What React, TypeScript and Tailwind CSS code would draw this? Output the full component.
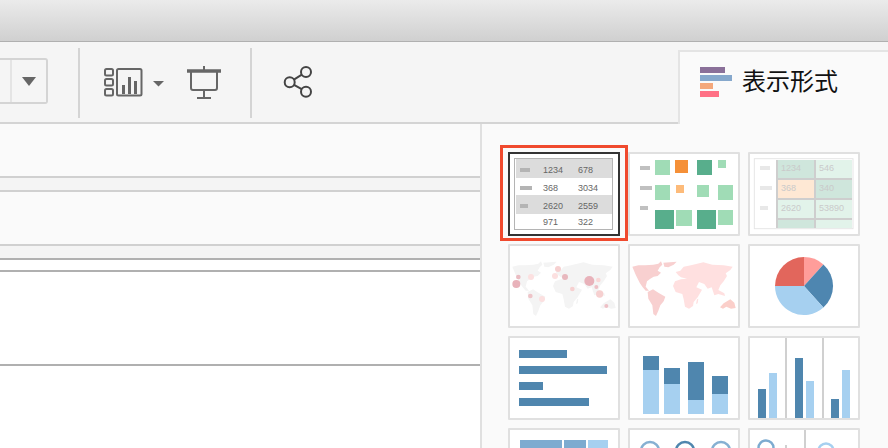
const AMERICAS =
  "M22 80 L40 76 L60 76 L85 74 L100 71 L108 64 L112 74 L104 82 L98 92 L108 98 L98 108 L86 110 L76 116 L66 124 L62 140 L72 152 L62 152 L52 140 L44 128 L32 104 Z " +
  "M115 68 L155 65 L146 74 L130 82 L118 80 Z " +
  "M68 156 L84 148 L100 158 L121 170 L116 184 L106 196 L100 212 L93 228 L85 222 L82 196 L70 176 Z";
const OLD_WORLD =
  "M152 96 L166 92 L176 80 L198 76 L235 67 L262 74 L296 76 L323 80 L316 90 L302 100 L306 108 L296 124 L286 136 L280 150 L298 160 L300 168 L280 162 L268 166 L260 142 L248 146 L238 132 L222 126 L214 142 L231 149 L218 172 L206 186 L204 198 L192 206 L180 200 L176 178 L172 162 L152 156 L144 138 L150 124 L168 118 L186 116 L168 112 L160 106 Z " +
  "M216 178 L220 176 L218 190 L213 192 Z";
const AUSTRALIA = "M285 202 L296 190 L306 184 L316 178 L328 188 L332 204 L318 206 L304 200 L294 206 Z";

const BUBBLES: [number, number, number, string][] = [
  [46, 111, 7, "#eabcc2"],
  [40, 132, 12, "#e8b2ba"],
  [84, 111, 9, "#fce0e0"],
  [82, 168, 7, "#eec4c8"],
  [117, 177, 9, "#fce0e0"],
  [165, 87, 9, "#f6d0d0"],
  [156, 108, 9, "#fce0e0"],
  [186, 111, 9, "#e8b8be"],
  [208, 147, 7, "#f6d0d0"],
  [259, 123, 15, "#e8b2ba"],
  [286, 120, 7, "#f9d8d8"],
  [280, 141, 6, "#eec0c6"],
  [290, 162, 11, "#f6d0d0"],
  [310, 198, 6, "#eec0c6"],
];

function Tile({ children, view }: { children: React.ReactNode; view: string }) {
  return (
    <div className="h-[84px] border-2 border-[#e0e0e0] bg-white rounded-[1px]">
      <svg width="108" height="80" viewBox={view} className="block">
        {children}
      </svg>
    </div>
  );
}

function TableTile() {
  const rows = [
    ["1234", "678", 5, 10, true],
    ["368", "3034", 23, 12, false],
    ["2620", "2559", 41, 8, true],
    ["971", "322", 57, 0, false],
  ] as const;
  return (
    <div className="relative h-[84px] border-2 border-[#333333] bg-white">
      {/* red selection frame sits over the gap round the tile */}
      <div className="absolute -left-[10px] -top-[9px] h-[96px] w-[128px] border-[3px] border-[#f04a2e] pointer-events-none" />
      <svg width="108" height="80" viewBox="0 0 108 80" className="block">
        <rect x="4.5" y="4.5" width="98" height="71" fill="#fff" stroke="#b4b4b4" />
        {rows.map(([a, b, y, dash, shaded]) => (
          <g key={a}>
            {shaded && <rect x="6" y={y} width="96" height="19" fill="#dcdcdc" />}
            {dash > 0 && <rect x="10" y={y + 9} width={dash} height="4" fill="#b4b4b4" />}
            <text x="33" y={y + 14} fontSize="9" fill="#666" fontFamily="Liberation Sans, sans-serif">{a}</text>
            <text x="68" y={y + 14} fontSize="9" fill="#666" fontFamily="Liberation Sans, sans-serif">{b}</text>
          </g>
        ))}
      </svg>
    </div>
  );
}

function Treemap() {
  const light = "#a0dcb6";
  const dark = "#58ae8c";
  const cells: [number, number, number, string][] = [
    [90, 45, 45, light], [150, 45, 39, "#f59038"], [216, 45, 45, dark], [279, 45, 24, light],
    [90, 120, 45, light], [153, 120, 24, "#fdbb7a"], [216, 120, 36, light], [279, 120, 45, light],
    [90, 195, 57, dark], [153, 195, 48, light], [216, 195, 57, dark], [279, 195, 45, light],
  ];
  return (
    <Tile view="15 27 324 240">
      <rect x="45" y="63" width="30" height="12" fill="#c0c0c0" />
      <rect x="45" y="123" width="36" height="12" fill="#c0c0c0" />
      <rect x="45" y="183" width="24" height="12" fill="#c0c0c0" />
      {cells.map(([x, y, s, c]) => (
        <rect key={`${x}-${y}`} x={x} y={y} width={s} height={s} fill={c} />
      ))}
    </Tile>
  );
}

function Highlight() {
  const a = "#cfe6dc";
  const b = "#e2f3ea";
  const cells: [number, number, number, string, string][] = [
    [99, 45, 54, a, "1234"], [213, 45, 54, b, "546"],
    [99, 105, 54, "#fee8d4", "368"], [213, 105, 54, a, "340"],
    [99, 165, 54, b, "2620"], [213, 165, 54, b, "53890"],
    [99, 225, 24, a, ""], [213, 225, 24, b, ""],
  ];
  return (
    <Tile view="15 27 324 240">
      <rect x="28" y="41" width="296" height="210" fill="#fff" stroke="#e6e6e6" strokeWidth="3" />
      <rect x="93" y="45" width="228" height="204" fill="#cecece" />
      <rect x="45" y="63" width="30" height="12" fill="#e8e8e8" />
      <rect x="45" y="123" width="36" height="12" fill="#e8e8e8" />
      <rect x="45" y="183" width="24" height="12" fill="#e8e8e8" />
      {cells.map(([x, y, h, c, t]) => (
        <g key={`${x}-${y}`}>
          <rect x={x} y={y} width="108" height={h} fill={c} />
          {t && (
            <text x={x + 9} y={y + 33} fontSize="27" fill="#cacaca" fontFamily="Liberation Sans, sans-serif">{t}</text>
          )}
        </g>
      ))}
    </Tile>
  );
}

function BubbleMap() {
  return (
    <Tile view="15 18 324 240">
      <path d={`${AMERICAS} ${OLD_WORLD} ${AUSTRALIA}`} fill="#f4f4f4" />
      {BUBBLES.map(([x, y, r, c]) => (
        <circle key={`${x}-${y}`} cx={x - 6} cy={y} r={r} fill={c} />
      ))}
    </Tile>
  );
}

function FilledMap() {
  return (
    <Tile view="15 18 324 240">
      <path d={OLD_WORLD} fill="#ffe0e0" />
      <path d={AMERICAS} fill="#f8d0d0" />
      <path d={AUSTRALIA} fill="#fbcfca" />
    </Tile>
  );
}

function Pie() {
  return (
    <Tile view="0 0 108 80">
      <path d="M54 40 L54 11 A29 29 0 0 1 73.4 18.4 Z" fill="#ff9d9a" />
      <path d="M54 40 L73.4 18.4 A29 29 0 0 1 73.4 61.6 Z" fill="#4e86b0" />
      <path d="M54 40 L73.4 61.6 A29 29 0 0 1 25 40 Z" fill="#a6d0f0" />
      <path d="M54 40 L25 40 A29 29 0 0 1 54 11 Z" fill="#e2665c" />
    </Tile>
  );
}

function HBars() {
  return (
    <Tile view="21 18 324 240">
      <rect x="48" y="54" width="144" height="24" fill="#4f86ae" />
      <rect x="48" y="102" width="264" height="24" fill="#4f86ae" />
      <rect x="48" y="150" width="72" height="24" fill="#4f86ae" />
      <rect x="48" y="198" width="210" height="24" fill="#4f86ae" />
    </Tile>
  );
}

function Stacked() {
  const bars: [number, number, number][] = [
    [420, 72, 114],
    [483, 108, 156],
    [555, 90, 204],
    [627, 132, 186],
  ];
  return (
    <Tile view="381 18 324 240">
      {bars.map(([x, top, mid]) => (
        <g key={x}>
          <rect x={x} y={top} width="48" height={mid - top} fill="#4f86ae" />
          <rect x={x} y={mid} width="48" height={246 - mid} fill="#a6d0f0" />
        </g>
      ))}
    </Tile>
  );
}

function SideBySide() {
  const bars: [number, number, string][] = [
    [45, 171, "#4f86ae"], [78, 123, "#a6d0f0"],
    [156, 78, "#4f86ae"], [189, 147, "#a6d0f0"],
    [264, 201, "#4f86ae"], [297, 114, "#a6d0f0"],
  ];
  return (
    <Tile view="21 18 324 240">
      <rect x="126" y="18" width="6" height="240" fill="#d0d0d0" />
      <rect x="237" y="18" width="6" height="240" fill="#d0d0d0" />
      {bars.map(([x, y, c]) => (
        <rect key={x} x={x} y={y} width="24" height={258 - y} fill={c} />
      ))}
    </Tile>
  );
}

function Segments() {
  return (
    <Tile view="0 0 108 80">
      <rect x="10" y="10" width="42" height="70" fill="#7dabd0" />
      <rect x="54" y="10" width="22" height="70" fill="#7dabd0" />
      <rect x="78" y="10" width="20" height="70" fill="#a6d0f0" />
    </Tile>
  );
}

function Rings() {
  return (
    <Tile view="0 0 108 80">
      <circle cx="20" cy="21" r="9" fill="none" stroke="#86b0d2" strokeWidth="2.5" />
      <circle cx="55" cy="21" r="9" fill="none" stroke="#4f86ae" strokeWidth="2.5" />
      <circle cx="91" cy="21" r="9" fill="none" stroke="#86b0d2" strokeWidth="2.5" />
    </Tile>
  );
}

function SplitRings() {
  return (
    <Tile view="0 0 108 80">
      <rect x="54" y="0" width="2" height="80" fill="#d0d0d0" />
      <circle cx="16" cy="18" r="7.5" fill="none" stroke="#7dabd0" strokeWidth="2.5" />
      <rect x="35" y="15" width="2" height="3" fill="#d0d0d0" />
      <circle cx="76" cy="21" r="7.5" fill="none" stroke="#a6d0f0" strokeWidth="2.5" />
    </Tile>
  );
}

export default function App() {
  return (
    <div className="w-[888px] h-[448px] overflow-hidden flex flex-col bg-white font-['Liberation_Sans','Noto_Sans_CJK_JP',sans-serif]">
      <div className="h-[42px] shrink-0 border-b border-[#b0b0b0] bg-gradient-to-b from-[#ebebeb] to-[#d0d0d0]" />

      <div className="h-[82px] shrink-0 flex items-start bg-[#f5f5f5] border-b-2 border-[#d4d4d4]">
        <div className="mt-[16px] w-[48px] h-[46px] flex border-2 border-l-0 border-[#d4d4d4] rounded-r-[3px]">
          <div className="w-[12px] border-r-2 border-[#e4e4e4]" />
          <div className="flex-1 flex items-center justify-center">
            <svg width="14" height="9" viewBox="0 0 14 9">
              <path d="M0 0 H14 L7 9 Z" fill="#666" />
            </svg>
          </div>
        </div>

        <div className="ml-[30px] mt-[6px] w-[2px] h-[70px] bg-[#d4d4d4]" />

        <svg width="62" height="30" viewBox="0 0 62 30" className="ml-[23px] mt-[25px]" fill="none" stroke="#666" strokeWidth="2">
          <rect x="2" y="2" width="8" height="6.5" rx="1.5" />
          <rect x="2" y="12" width="8" height="6.5" rx="1.5" />
          <rect x="2" y="22" width="8" height="6.5" rx="1.5" />
          <rect x="14" y="2" width="24.5" height="26.5" rx="1.5" />
          <path d="M20.5 27 V18 M26.5 27 V10 M32.5 27 V14" strokeWidth="3" />
          <path d="M50 14 H61 L55.5 19.5 Z" fill="#666" stroke="none" />
        </svg>

        <svg width="36" height="34" viewBox="0 0 36 34" className="ml-[21px] mt-[23px]" fill="none" stroke="#666" strokeWidth="2">
          <path d="M18 1 V5" />
          <path d="M1 6 H35" strokeWidth="3.5" />
          <path d="M5 7 V23 Q5 25 7 25 H29 Q31 25 31 23 V7" />
          <path d="M18 25 V33 M11 33 H25" />
        </svg>

        <div className="ml-[28px] mt-[6px] w-[2px] h-[70px] bg-[#d4d4d4]" />

        <svg width="32" height="34" viewBox="0 0 32 34" className="ml-[30px] mt-[23px]" fill="none" stroke="#444" strokeWidth="2">
          <circle cx="24" cy="7" r="5" />
          <circle cx="7.7" cy="17.3" r="5" />
          <circle cx="24" cy="26.7" r="5" />
          <path d="M11.9 14.6 L19.8 9.7 M12 19.8 L19.7 24.2" />
        </svg>

        <div className="ml-auto mt-[8px] w-[210px] h-[74px] relative flex items-start border-l-2 border-t-2 border-[#e4e4e4] bg-[#fafafa] pl-[20px] pt-[15px]">
          <svg width="32" height="30" viewBox="0 0 32 30" className="shrink-0">
            <rect x="0" y="0" width="25" height="6" fill="#8a7099" />
            <rect x="0" y="8" width="32" height="6" fill="#86a8cc" />
            <rect x="0" y="16" width="13" height="6" fill="#f4a87c" />
            <rect x="0" y="24" width="19" height="6" fill="#ff7085" />
          </svg>
          <span className="ml-[10px] -mt-[1px] text-[24px] leading-[32px] text-[#111111] whitespace-nowrap">表示形式</span>
        </div>
      </div>

      <div className="flex-1 flex min-h-0">
        <div className="w-[480px] shrink-0 flex flex-col">
          <div className="h-[54px] shrink-0 bg-[#fafafa] border-b-2 border-[#d0d0d0]" />
          <div className="h-[14px] shrink-0 bg-[#f4f4f4] border-b-2 border-[#d0d0d0]" />
          <div className="h-[54px] shrink-0 bg-[#fafafa] border-b-2 border-[#d0d0d0]" />
          <div className="h-[14px] shrink-0 bg-[#f4f4f4] border-b-2 border-[#b0b0b0]" />
          <div className="h-[12px] shrink-0 bg-white border-b-2 border-[#b0b0b0]" />
          <div className="h-[94px] shrink-0 bg-white border-b-2 border-[#b0b0b0]" />
          <div className="flex-1 bg-white" />
        </div>

        <div className="flex-1 border-l-2 border-[#e0e0e0] bg-[#fafafa] pl-[26px] pt-[28px]">
          <div className="grid grid-cols-[112px_112px_112px] gap-2">
            <TableTile />
            <Treemap />
            <Highlight />
            <BubbleMap />
            <FilledMap />
            <Pie />
            <HBars />
            <Stacked />
            <SideBySide />
            <Segments />
            <Rings />
            <SplitRings />
          </div>
        </div>
      </div>
    </div>
  );
}
